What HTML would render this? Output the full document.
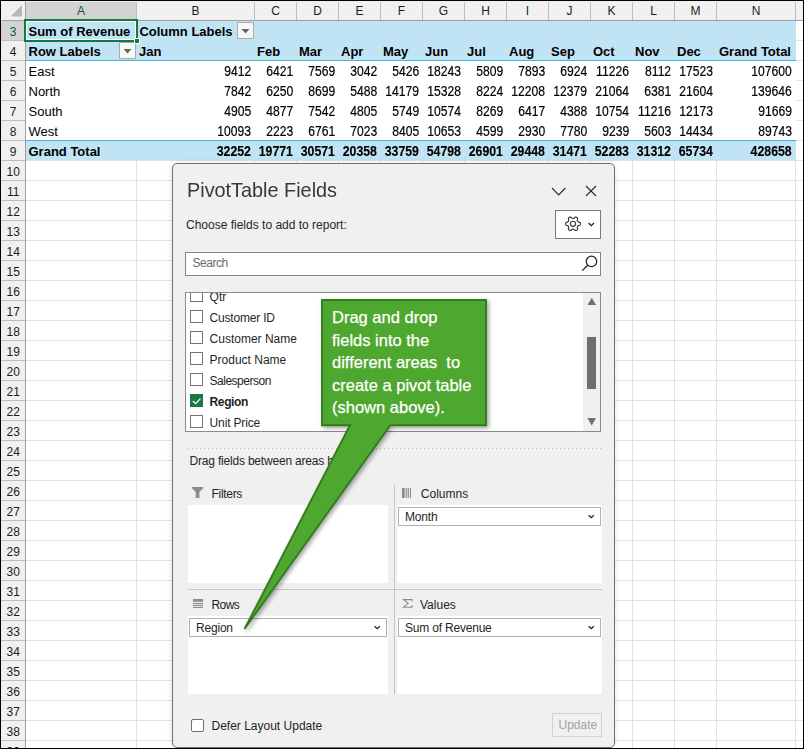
<!DOCTYPE html>
<html><head><meta charset="utf-8"><style>
*{margin:0;padding:0;box-sizing:border-box}
html,body{width:804px;height:749px;overflow:hidden;background:#fff;font-family:"Liberation Sans",sans-serif;color:#000}
.a{position:absolute}
.s{position:absolute;white-space:nowrap}
.s span{display:inline-block}
</style></head><body>
<div class="a" style="left:0;top:0;width:804px;height:749px;overflow:hidden">

<div class="a" style="left:1px;top:1px;width:802px;height:19px;background:#f0f0f0"></div>
<div class="a" style="left:1px;top:20px;width:24px;height:728px;background:#f0f0f0"></div>
<div class="a" style="left:26px;top:2px;width:110px;height:18px;background:#d3d3d3"></div>
<div class="a" style="left:1px;top:21px;width:24px;height:19px;background:#d3d3d3"></div>
<svg class="a" style="left:0;top:0" width="26" height="20"><polygon points="10.5,16.5 22,5 22,16.5" fill="#b9b9b9"/></svg>
<div class="a" style="left:26px;top:40px;width:777px;height:1px;background:#e1e1e1"></div>
<div class="a" style="left:26px;top:60px;width:777px;height:1px;background:#e1e1e1"></div>
<div class="a" style="left:26px;top:80px;width:777px;height:1px;background:#e1e1e1"></div>
<div class="a" style="left:26px;top:100px;width:777px;height:1px;background:#e1e1e1"></div>
<div class="a" style="left:26px;top:120px;width:777px;height:1px;background:#e1e1e1"></div>
<div class="a" style="left:26px;top:140px;width:777px;height:1px;background:#e1e1e1"></div>
<div class="a" style="left:26px;top:160px;width:777px;height:1px;background:#e1e1e1"></div>
<div class="a" style="left:26px;top:180px;width:777px;height:1px;background:#e1e1e1"></div>
<div class="a" style="left:26px;top:200px;width:777px;height:1px;background:#e1e1e1"></div>
<div class="a" style="left:26px;top:220px;width:777px;height:1px;background:#e1e1e1"></div>
<div class="a" style="left:26px;top:240px;width:777px;height:1px;background:#e1e1e1"></div>
<div class="a" style="left:26px;top:260px;width:777px;height:1px;background:#e1e1e1"></div>
<div class="a" style="left:26px;top:280px;width:777px;height:1px;background:#e1e1e1"></div>
<div class="a" style="left:26px;top:300px;width:777px;height:1px;background:#e1e1e1"></div>
<div class="a" style="left:26px;top:320px;width:777px;height:1px;background:#e1e1e1"></div>
<div class="a" style="left:26px;top:340px;width:777px;height:1px;background:#e1e1e1"></div>
<div class="a" style="left:26px;top:360px;width:777px;height:1px;background:#e1e1e1"></div>
<div class="a" style="left:26px;top:380px;width:777px;height:1px;background:#e1e1e1"></div>
<div class="a" style="left:26px;top:400px;width:777px;height:1px;background:#e1e1e1"></div>
<div class="a" style="left:26px;top:420px;width:777px;height:1px;background:#e1e1e1"></div>
<div class="a" style="left:26px;top:440px;width:777px;height:1px;background:#e1e1e1"></div>
<div class="a" style="left:26px;top:460px;width:777px;height:1px;background:#e1e1e1"></div>
<div class="a" style="left:26px;top:480px;width:777px;height:1px;background:#e1e1e1"></div>
<div class="a" style="left:26px;top:500px;width:777px;height:1px;background:#e1e1e1"></div>
<div class="a" style="left:26px;top:520px;width:777px;height:1px;background:#e1e1e1"></div>
<div class="a" style="left:26px;top:540px;width:777px;height:1px;background:#e1e1e1"></div>
<div class="a" style="left:26px;top:560px;width:777px;height:1px;background:#e1e1e1"></div>
<div class="a" style="left:26px;top:580px;width:777px;height:1px;background:#e1e1e1"></div>
<div class="a" style="left:26px;top:600px;width:777px;height:1px;background:#e1e1e1"></div>
<div class="a" style="left:26px;top:620px;width:777px;height:1px;background:#e1e1e1"></div>
<div class="a" style="left:26px;top:640px;width:777px;height:1px;background:#e1e1e1"></div>
<div class="a" style="left:26px;top:660px;width:777px;height:1px;background:#e1e1e1"></div>
<div class="a" style="left:26px;top:680px;width:777px;height:1px;background:#e1e1e1"></div>
<div class="a" style="left:26px;top:700px;width:777px;height:1px;background:#e1e1e1"></div>
<div class="a" style="left:26px;top:720px;width:777px;height:1px;background:#e1e1e1"></div>
<div class="a" style="left:26px;top:740px;width:777px;height:1px;background:#e1e1e1"></div>
<div class="a" style="left:136px;top:21px;width:1px;height:727px;background:#e1e1e1"></div>
<div class="a" style="left:254px;top:21px;width:1px;height:727px;background:#e1e1e1"></div>
<div class="a" style="left:296px;top:21px;width:1px;height:727px;background:#e1e1e1"></div>
<div class="a" style="left:338px;top:21px;width:1px;height:727px;background:#e1e1e1"></div>
<div class="a" style="left:380px;top:21px;width:1px;height:727px;background:#e1e1e1"></div>
<div class="a" style="left:422px;top:21px;width:1px;height:727px;background:#e1e1e1"></div>
<div class="a" style="left:464px;top:21px;width:1px;height:727px;background:#e1e1e1"></div>
<div class="a" style="left:506px;top:21px;width:1px;height:727px;background:#e1e1e1"></div>
<div class="a" style="left:548px;top:21px;width:1px;height:727px;background:#e1e1e1"></div>
<div class="a" style="left:590px;top:21px;width:1px;height:727px;background:#e1e1e1"></div>
<div class="a" style="left:632px;top:21px;width:1px;height:727px;background:#e1e1e1"></div>
<div class="a" style="left:674px;top:21px;width:1px;height:727px;background:#e1e1e1"></div>
<div class="a" style="left:716px;top:21px;width:1px;height:727px;background:#e1e1e1"></div>
<div class="a" style="left:795px;top:21px;width:1px;height:727px;background:#e1e1e1"></div>
<div class="a" style="left:136px;top:2px;width:1px;height:18px;background:#bdbdbd"></div>
<div class="a" style="left:254px;top:2px;width:1px;height:18px;background:#bdbdbd"></div>
<div class="a" style="left:296px;top:2px;width:1px;height:18px;background:#bdbdbd"></div>
<div class="a" style="left:338px;top:2px;width:1px;height:18px;background:#bdbdbd"></div>
<div class="a" style="left:380px;top:2px;width:1px;height:18px;background:#bdbdbd"></div>
<div class="a" style="left:422px;top:2px;width:1px;height:18px;background:#bdbdbd"></div>
<div class="a" style="left:464px;top:2px;width:1px;height:18px;background:#bdbdbd"></div>
<div class="a" style="left:506px;top:2px;width:1px;height:18px;background:#bdbdbd"></div>
<div class="a" style="left:548px;top:2px;width:1px;height:18px;background:#bdbdbd"></div>
<div class="a" style="left:590px;top:2px;width:1px;height:18px;background:#bdbdbd"></div>
<div class="a" style="left:632px;top:2px;width:1px;height:18px;background:#bdbdbd"></div>
<div class="a" style="left:674px;top:2px;width:1px;height:18px;background:#bdbdbd"></div>
<div class="a" style="left:716px;top:2px;width:1px;height:18px;background:#bdbdbd"></div>
<div class="a" style="left:795px;top:2px;width:1px;height:18px;background:#bdbdbd"></div>
<div class="a" style="left:1px;top:40px;width:24px;height:1px;background:#bdbdbd"></div>
<div class="a" style="left:1px;top:60px;width:24px;height:1px;background:#bdbdbd"></div>
<div class="a" style="left:1px;top:80px;width:24px;height:1px;background:#bdbdbd"></div>
<div class="a" style="left:1px;top:100px;width:24px;height:1px;background:#bdbdbd"></div>
<div class="a" style="left:1px;top:120px;width:24px;height:1px;background:#bdbdbd"></div>
<div class="a" style="left:1px;top:140px;width:24px;height:1px;background:#bdbdbd"></div>
<div class="a" style="left:1px;top:160px;width:24px;height:1px;background:#bdbdbd"></div>
<div class="a" style="left:1px;top:180px;width:24px;height:1px;background:#bdbdbd"></div>
<div class="a" style="left:1px;top:200px;width:24px;height:1px;background:#bdbdbd"></div>
<div class="a" style="left:1px;top:220px;width:24px;height:1px;background:#bdbdbd"></div>
<div class="a" style="left:1px;top:240px;width:24px;height:1px;background:#bdbdbd"></div>
<div class="a" style="left:1px;top:260px;width:24px;height:1px;background:#bdbdbd"></div>
<div class="a" style="left:1px;top:280px;width:24px;height:1px;background:#bdbdbd"></div>
<div class="a" style="left:1px;top:300px;width:24px;height:1px;background:#bdbdbd"></div>
<div class="a" style="left:1px;top:320px;width:24px;height:1px;background:#bdbdbd"></div>
<div class="a" style="left:1px;top:340px;width:24px;height:1px;background:#bdbdbd"></div>
<div class="a" style="left:1px;top:360px;width:24px;height:1px;background:#bdbdbd"></div>
<div class="a" style="left:1px;top:380px;width:24px;height:1px;background:#bdbdbd"></div>
<div class="a" style="left:1px;top:400px;width:24px;height:1px;background:#bdbdbd"></div>
<div class="a" style="left:1px;top:420px;width:24px;height:1px;background:#bdbdbd"></div>
<div class="a" style="left:1px;top:440px;width:24px;height:1px;background:#bdbdbd"></div>
<div class="a" style="left:1px;top:460px;width:24px;height:1px;background:#bdbdbd"></div>
<div class="a" style="left:1px;top:480px;width:24px;height:1px;background:#bdbdbd"></div>
<div class="a" style="left:1px;top:500px;width:24px;height:1px;background:#bdbdbd"></div>
<div class="a" style="left:1px;top:520px;width:24px;height:1px;background:#bdbdbd"></div>
<div class="a" style="left:1px;top:540px;width:24px;height:1px;background:#bdbdbd"></div>
<div class="a" style="left:1px;top:560px;width:24px;height:1px;background:#bdbdbd"></div>
<div class="a" style="left:1px;top:580px;width:24px;height:1px;background:#bdbdbd"></div>
<div class="a" style="left:1px;top:600px;width:24px;height:1px;background:#bdbdbd"></div>
<div class="a" style="left:1px;top:620px;width:24px;height:1px;background:#bdbdbd"></div>
<div class="a" style="left:1px;top:640px;width:24px;height:1px;background:#bdbdbd"></div>
<div class="a" style="left:1px;top:660px;width:24px;height:1px;background:#bdbdbd"></div>
<div class="a" style="left:1px;top:680px;width:24px;height:1px;background:#bdbdbd"></div>
<div class="a" style="left:1px;top:700px;width:24px;height:1px;background:#bdbdbd"></div>
<div class="a" style="left:1px;top:720px;width:24px;height:1px;background:#bdbdbd"></div>
<div class="a" style="left:1px;top:740px;width:24px;height:1px;background:#bdbdbd"></div>
<div class="a" style="left:1px;top:20px;width:802px;height:1px;background:#a0a0a0"></div>
<div class="a" style="left:25px;top:1px;width:1px;height:747px;background:#a0a0a0"></div>
<div class="s" style="left:-19.0px;width:200px;text-align:center;top:4.84px;font-size:12px;line-height:12px;font-weight:normal;color:#0e5c2e;">A</div>
<div class="s" style="left:95.5px;width:200px;text-align:center;top:4.84px;font-size:12px;line-height:12px;font-weight:normal;color:#1c1c1c;">B</div>
<div class="s" style="left:175.5px;width:200px;text-align:center;top:4.84px;font-size:12px;line-height:12px;font-weight:normal;color:#1c1c1c;">C</div>
<div class="s" style="left:217.5px;width:200px;text-align:center;top:4.84px;font-size:12px;line-height:12px;font-weight:normal;color:#1c1c1c;">D</div>
<div class="s" style="left:259.5px;width:200px;text-align:center;top:4.84px;font-size:12px;line-height:12px;font-weight:normal;color:#1c1c1c;">E</div>
<div class="s" style="left:301.5px;width:200px;text-align:center;top:4.84px;font-size:12px;line-height:12px;font-weight:normal;color:#1c1c1c;">F</div>
<div class="s" style="left:343.5px;width:200px;text-align:center;top:4.84px;font-size:12px;line-height:12px;font-weight:normal;color:#1c1c1c;">G</div>
<div class="s" style="left:385.5px;width:200px;text-align:center;top:4.84px;font-size:12px;line-height:12px;font-weight:normal;color:#1c1c1c;">H</div>
<div class="s" style="left:427.5px;width:200px;text-align:center;top:4.84px;font-size:12px;line-height:12px;font-weight:normal;color:#1c1c1c;">I</div>
<div class="s" style="left:469.5px;width:200px;text-align:center;top:4.84px;font-size:12px;line-height:12px;font-weight:normal;color:#1c1c1c;">J</div>
<div class="s" style="left:511.5px;width:200px;text-align:center;top:4.84px;font-size:12px;line-height:12px;font-weight:normal;color:#1c1c1c;">K</div>
<div class="s" style="left:553.5px;width:200px;text-align:center;top:4.84px;font-size:12px;line-height:12px;font-weight:normal;color:#1c1c1c;">L</div>
<div class="s" style="left:595.5px;width:200px;text-align:center;top:4.84px;font-size:12px;line-height:12px;font-weight:normal;color:#1c1c1c;">M</div>
<div class="s" style="left:656.0px;width:200px;text-align:center;top:4.84px;font-size:12px;line-height:12px;font-weight:normal;color:#1c1c1c;">N</div>
<div class="s" style="left:-86.8px;width:200px;text-align:center;top:25.84px;font-size:12px;line-height:12px;font-weight:normal;color:#0e5c2e;">3</div>
<div class="s" style="left:-86.8px;width:200px;text-align:center;top:45.84px;font-size:12px;line-height:12px;font-weight:normal;color:#1c1c1c;">4</div>
<div class="s" style="left:-86.8px;width:200px;text-align:center;top:65.84px;font-size:12px;line-height:12px;font-weight:normal;color:#1c1c1c;">5</div>
<div class="s" style="left:-86.8px;width:200px;text-align:center;top:85.84px;font-size:12px;line-height:12px;font-weight:normal;color:#1c1c1c;">6</div>
<div class="s" style="left:-86.8px;width:200px;text-align:center;top:105.84px;font-size:12px;line-height:12px;font-weight:normal;color:#1c1c1c;">7</div>
<div class="s" style="left:-86.8px;width:200px;text-align:center;top:125.84px;font-size:12px;line-height:12px;font-weight:normal;color:#1c1c1c;">8</div>
<div class="s" style="left:-86.8px;width:200px;text-align:center;top:145.84px;font-size:12px;line-height:12px;font-weight:normal;color:#1c1c1c;">9</div>
<div class="s" style="left:-86.8px;width:200px;text-align:center;top:165.84px;font-size:12px;line-height:12px;font-weight:normal;color:#1c1c1c;">10</div>
<div class="s" style="left:-86.8px;width:200px;text-align:center;top:185.84px;font-size:12px;line-height:12px;font-weight:normal;color:#1c1c1c;">11</div>
<div class="s" style="left:-86.8px;width:200px;text-align:center;top:205.84px;font-size:12px;line-height:12px;font-weight:normal;color:#1c1c1c;">12</div>
<div class="s" style="left:-86.8px;width:200px;text-align:center;top:225.84px;font-size:12px;line-height:12px;font-weight:normal;color:#1c1c1c;">13</div>
<div class="s" style="left:-86.8px;width:200px;text-align:center;top:245.84px;font-size:12px;line-height:12px;font-weight:normal;color:#1c1c1c;">14</div>
<div class="s" style="left:-86.8px;width:200px;text-align:center;top:265.84px;font-size:12px;line-height:12px;font-weight:normal;color:#1c1c1c;">15</div>
<div class="s" style="left:-86.8px;width:200px;text-align:center;top:285.84px;font-size:12px;line-height:12px;font-weight:normal;color:#1c1c1c;">16</div>
<div class="s" style="left:-86.8px;width:200px;text-align:center;top:305.84px;font-size:12px;line-height:12px;font-weight:normal;color:#1c1c1c;">17</div>
<div class="s" style="left:-86.8px;width:200px;text-align:center;top:325.84px;font-size:12px;line-height:12px;font-weight:normal;color:#1c1c1c;">18</div>
<div class="s" style="left:-86.8px;width:200px;text-align:center;top:345.84px;font-size:12px;line-height:12px;font-weight:normal;color:#1c1c1c;">19</div>
<div class="s" style="left:-86.8px;width:200px;text-align:center;top:365.84px;font-size:12px;line-height:12px;font-weight:normal;color:#1c1c1c;">20</div>
<div class="s" style="left:-86.8px;width:200px;text-align:center;top:385.84px;font-size:12px;line-height:12px;font-weight:normal;color:#1c1c1c;">21</div>
<div class="s" style="left:-86.8px;width:200px;text-align:center;top:405.84px;font-size:12px;line-height:12px;font-weight:normal;color:#1c1c1c;">22</div>
<div class="s" style="left:-86.8px;width:200px;text-align:center;top:425.84px;font-size:12px;line-height:12px;font-weight:normal;color:#1c1c1c;">23</div>
<div class="s" style="left:-86.8px;width:200px;text-align:center;top:445.84px;font-size:12px;line-height:12px;font-weight:normal;color:#1c1c1c;">24</div>
<div class="s" style="left:-86.8px;width:200px;text-align:center;top:465.84px;font-size:12px;line-height:12px;font-weight:normal;color:#1c1c1c;">25</div>
<div class="s" style="left:-86.8px;width:200px;text-align:center;top:485.84px;font-size:12px;line-height:12px;font-weight:normal;color:#1c1c1c;">26</div>
<div class="s" style="left:-86.8px;width:200px;text-align:center;top:505.84px;font-size:12px;line-height:12px;font-weight:normal;color:#1c1c1c;">27</div>
<div class="s" style="left:-86.8px;width:200px;text-align:center;top:525.84px;font-size:12px;line-height:12px;font-weight:normal;color:#1c1c1c;">28</div>
<div class="s" style="left:-86.8px;width:200px;text-align:center;top:545.84px;font-size:12px;line-height:12px;font-weight:normal;color:#1c1c1c;">29</div>
<div class="s" style="left:-86.8px;width:200px;text-align:center;top:565.84px;font-size:12px;line-height:12px;font-weight:normal;color:#1c1c1c;">30</div>
<div class="s" style="left:-86.8px;width:200px;text-align:center;top:585.84px;font-size:12px;line-height:12px;font-weight:normal;color:#1c1c1c;">31</div>
<div class="s" style="left:-86.8px;width:200px;text-align:center;top:605.84px;font-size:12px;line-height:12px;font-weight:normal;color:#1c1c1c;">32</div>
<div class="s" style="left:-86.8px;width:200px;text-align:center;top:625.84px;font-size:12px;line-height:12px;font-weight:normal;color:#1c1c1c;">33</div>
<div class="s" style="left:-86.8px;width:200px;text-align:center;top:645.84px;font-size:12px;line-height:12px;font-weight:normal;color:#1c1c1c;">34</div>
<div class="s" style="left:-86.8px;width:200px;text-align:center;top:665.84px;font-size:12px;line-height:12px;font-weight:normal;color:#1c1c1c;">35</div>
<div class="s" style="left:-86.8px;width:200px;text-align:center;top:685.84px;font-size:12px;line-height:12px;font-weight:normal;color:#1c1c1c;">36</div>
<div class="s" style="left:-86.8px;width:200px;text-align:center;top:705.84px;font-size:12px;line-height:12px;font-weight:normal;color:#1c1c1c;">37</div>
<div class="s" style="left:-86.8px;width:200px;text-align:center;top:725.84px;font-size:12px;line-height:12px;font-weight:normal;color:#1c1c1c;">38</div>
<div class="s" style="left:-86.8px;width:200px;text-align:center;top:745.84px;font-size:12px;line-height:12px;font-weight:normal;color:#1c1c1c;">39</div>
<div class="a" style="left:26px;top:21px;width:770px;height:39px;background:#c1e4f5"></div>
<div class="a" style="left:26px;top:60px;width:770px;height:1px;background:#44b3e1"></div>
<div class="a" style="left:26px;top:61px;width:770px;height:79px;background:#fff"></div>
<div class="a" style="left:26px;top:140px;width:770px;height:1px;background:#44b3e1"></div>
<div class="a" style="left:26px;top:141px;width:770px;height:19px;background:#c1e4f5"></div>
<div class="s" style="left:28.5px;top:25.00px;font-size:13px;line-height:13px;font-weight:bold;color:#000;">Sum of Revenue</div>
<div class="s" style="left:139.4px;top:25.00px;font-size:13px;line-height:13px;font-weight:bold;color:#000;">Column Labels</div>
<div class="s" style="left:28.5px;top:45.00px;font-size:13px;line-height:13px;font-weight:bold;color:#000;">Row Labels</div>
<div class="s" style="left:139px;top:45.00px;font-size:13px;line-height:13px;font-weight:bold;color:#000;">Jan</div>
<div class="s" style="left:257px;top:45.00px;font-size:13px;line-height:13px;font-weight:bold;color:#000;">Feb</div>
<div class="s" style="left:299px;top:45.00px;font-size:13px;line-height:13px;font-weight:bold;color:#000;">Mar</div>
<div class="s" style="left:341px;top:45.00px;font-size:13px;line-height:13px;font-weight:bold;color:#000;">Apr</div>
<div class="s" style="left:383px;top:45.00px;font-size:13px;line-height:13px;font-weight:bold;color:#000;">May</div>
<div class="s" style="left:425px;top:45.00px;font-size:13px;line-height:13px;font-weight:bold;color:#000;">Jun</div>
<div class="s" style="left:467px;top:45.00px;font-size:13px;line-height:13px;font-weight:bold;color:#000;">Jul</div>
<div class="s" style="left:509px;top:45.00px;font-size:13px;line-height:13px;font-weight:bold;color:#000;">Aug</div>
<div class="s" style="left:551px;top:45.00px;font-size:13px;line-height:13px;font-weight:bold;color:#000;">Sep</div>
<div class="s" style="left:593px;top:45.00px;font-size:13px;line-height:13px;font-weight:bold;color:#000;">Oct</div>
<div class="s" style="left:635px;top:45.00px;font-size:13px;line-height:13px;font-weight:bold;color:#000;">Nov</div>
<div class="s" style="left:677px;top:45.00px;font-size:13px;line-height:13px;font-weight:bold;color:#000;">Dec</div>
<div class="s" style="left:719px;top:45.00px;font-size:13px;line-height:13px;font-weight:bold;color:#000;">Grand Total</div>
<div class="s" style="left:28.5px;top:65.00px;font-size:13px;line-height:13px;font-weight:normal;color:#000;">East</div>
<div class="s" style="right:552.8px;text-align:right;top:64.15px;font-size:14px;line-height:14px;font-weight:normal;color:#000;-webkit-text-stroke:0.2px #000;"><span style="transform:scaleX(0.865);transform-origin:100% 0">9412</span></div>
<div class="s" style="right:510.8px;text-align:right;top:64.15px;font-size:14px;line-height:14px;font-weight:normal;color:#000;-webkit-text-stroke:0.2px #000;"><span style="transform:scaleX(0.865);transform-origin:100% 0">6421</span></div>
<div class="s" style="right:468.8px;text-align:right;top:64.15px;font-size:14px;line-height:14px;font-weight:normal;color:#000;-webkit-text-stroke:0.2px #000;"><span style="transform:scaleX(0.865);transform-origin:100% 0">7569</span></div>
<div class="s" style="right:426.8px;text-align:right;top:64.15px;font-size:14px;line-height:14px;font-weight:normal;color:#000;-webkit-text-stroke:0.2px #000;"><span style="transform:scaleX(0.865);transform-origin:100% 0">3042</span></div>
<div class="s" style="right:384.8px;text-align:right;top:64.15px;font-size:14px;line-height:14px;font-weight:normal;color:#000;-webkit-text-stroke:0.2px #000;"><span style="transform:scaleX(0.865);transform-origin:100% 0">5426</span></div>
<div class="s" style="right:342.8px;text-align:right;top:64.15px;font-size:14px;line-height:14px;font-weight:normal;color:#000;-webkit-text-stroke:0.2px #000;"><span style="transform:scaleX(0.865);transform-origin:100% 0">18243</span></div>
<div class="s" style="right:300.8px;text-align:right;top:64.15px;font-size:14px;line-height:14px;font-weight:normal;color:#000;-webkit-text-stroke:0.2px #000;"><span style="transform:scaleX(0.865);transform-origin:100% 0">5809</span></div>
<div class="s" style="right:258.79999999999995px;text-align:right;top:64.15px;font-size:14px;line-height:14px;font-weight:normal;color:#000;-webkit-text-stroke:0.2px #000;"><span style="transform:scaleX(0.865);transform-origin:100% 0">7893</span></div>
<div class="s" style="right:216.79999999999995px;text-align:right;top:64.15px;font-size:14px;line-height:14px;font-weight:normal;color:#000;-webkit-text-stroke:0.2px #000;"><span style="transform:scaleX(0.865);transform-origin:100% 0">6924</span></div>
<div class="s" style="right:174.79999999999995px;text-align:right;top:64.15px;font-size:14px;line-height:14px;font-weight:normal;color:#000;-webkit-text-stroke:0.2px #000;"><span style="transform:scaleX(0.865);transform-origin:100% 0">11226</span></div>
<div class="s" style="right:132.79999999999995px;text-align:right;top:64.15px;font-size:14px;line-height:14px;font-weight:normal;color:#000;-webkit-text-stroke:0.2px #000;"><span style="transform:scaleX(0.865);transform-origin:100% 0">8112</span></div>
<div class="s" style="right:90.79999999999995px;text-align:right;top:64.15px;font-size:14px;line-height:14px;font-weight:normal;color:#000;-webkit-text-stroke:0.2px #000;"><span style="transform:scaleX(0.865);transform-origin:100% 0">17523</span></div>
<div class="s" style="right:11.799999999999955px;text-align:right;top:64.15px;font-size:14px;line-height:14px;font-weight:normal;color:#000;-webkit-text-stroke:0.2px #000;"><span style="transform:scaleX(0.865);transform-origin:100% 0">107600</span></div>
<div class="s" style="left:28.5px;top:85.00px;font-size:13px;line-height:13px;font-weight:normal;color:#000;">North</div>
<div class="s" style="right:552.8px;text-align:right;top:84.15px;font-size:14px;line-height:14px;font-weight:normal;color:#000;-webkit-text-stroke:0.2px #000;"><span style="transform:scaleX(0.865);transform-origin:100% 0">7842</span></div>
<div class="s" style="right:510.8px;text-align:right;top:84.15px;font-size:14px;line-height:14px;font-weight:normal;color:#000;-webkit-text-stroke:0.2px #000;"><span style="transform:scaleX(0.865);transform-origin:100% 0">6250</span></div>
<div class="s" style="right:468.8px;text-align:right;top:84.15px;font-size:14px;line-height:14px;font-weight:normal;color:#000;-webkit-text-stroke:0.2px #000;"><span style="transform:scaleX(0.865);transform-origin:100% 0">8699</span></div>
<div class="s" style="right:426.8px;text-align:right;top:84.15px;font-size:14px;line-height:14px;font-weight:normal;color:#000;-webkit-text-stroke:0.2px #000;"><span style="transform:scaleX(0.865);transform-origin:100% 0">5488</span></div>
<div class="s" style="right:384.8px;text-align:right;top:84.15px;font-size:14px;line-height:14px;font-weight:normal;color:#000;-webkit-text-stroke:0.2px #000;"><span style="transform:scaleX(0.865);transform-origin:100% 0">14179</span></div>
<div class="s" style="right:342.8px;text-align:right;top:84.15px;font-size:14px;line-height:14px;font-weight:normal;color:#000;-webkit-text-stroke:0.2px #000;"><span style="transform:scaleX(0.865);transform-origin:100% 0">15328</span></div>
<div class="s" style="right:300.8px;text-align:right;top:84.15px;font-size:14px;line-height:14px;font-weight:normal;color:#000;-webkit-text-stroke:0.2px #000;"><span style="transform:scaleX(0.865);transform-origin:100% 0">8224</span></div>
<div class="s" style="right:258.79999999999995px;text-align:right;top:84.15px;font-size:14px;line-height:14px;font-weight:normal;color:#000;-webkit-text-stroke:0.2px #000;"><span style="transform:scaleX(0.865);transform-origin:100% 0">12208</span></div>
<div class="s" style="right:216.79999999999995px;text-align:right;top:84.15px;font-size:14px;line-height:14px;font-weight:normal;color:#000;-webkit-text-stroke:0.2px #000;"><span style="transform:scaleX(0.865);transform-origin:100% 0">12379</span></div>
<div class="s" style="right:174.79999999999995px;text-align:right;top:84.15px;font-size:14px;line-height:14px;font-weight:normal;color:#000;-webkit-text-stroke:0.2px #000;"><span style="transform:scaleX(0.865);transform-origin:100% 0">21064</span></div>
<div class="s" style="right:132.79999999999995px;text-align:right;top:84.15px;font-size:14px;line-height:14px;font-weight:normal;color:#000;-webkit-text-stroke:0.2px #000;"><span style="transform:scaleX(0.865);transform-origin:100% 0">6381</span></div>
<div class="s" style="right:90.79999999999995px;text-align:right;top:84.15px;font-size:14px;line-height:14px;font-weight:normal;color:#000;-webkit-text-stroke:0.2px #000;"><span style="transform:scaleX(0.865);transform-origin:100% 0">21604</span></div>
<div class="s" style="right:11.799999999999955px;text-align:right;top:84.15px;font-size:14px;line-height:14px;font-weight:normal;color:#000;-webkit-text-stroke:0.2px #000;"><span style="transform:scaleX(0.865);transform-origin:100% 0">139646</span></div>
<div class="s" style="left:28.5px;top:105.00px;font-size:13px;line-height:13px;font-weight:normal;color:#000;">South</div>
<div class="s" style="right:552.8px;text-align:right;top:104.15px;font-size:14px;line-height:14px;font-weight:normal;color:#000;-webkit-text-stroke:0.2px #000;"><span style="transform:scaleX(0.865);transform-origin:100% 0">4905</span></div>
<div class="s" style="right:510.8px;text-align:right;top:104.15px;font-size:14px;line-height:14px;font-weight:normal;color:#000;-webkit-text-stroke:0.2px #000;"><span style="transform:scaleX(0.865);transform-origin:100% 0">4877</span></div>
<div class="s" style="right:468.8px;text-align:right;top:104.15px;font-size:14px;line-height:14px;font-weight:normal;color:#000;-webkit-text-stroke:0.2px #000;"><span style="transform:scaleX(0.865);transform-origin:100% 0">7542</span></div>
<div class="s" style="right:426.8px;text-align:right;top:104.15px;font-size:14px;line-height:14px;font-weight:normal;color:#000;-webkit-text-stroke:0.2px #000;"><span style="transform:scaleX(0.865);transform-origin:100% 0">4805</span></div>
<div class="s" style="right:384.8px;text-align:right;top:104.15px;font-size:14px;line-height:14px;font-weight:normal;color:#000;-webkit-text-stroke:0.2px #000;"><span style="transform:scaleX(0.865);transform-origin:100% 0">5749</span></div>
<div class="s" style="right:342.8px;text-align:right;top:104.15px;font-size:14px;line-height:14px;font-weight:normal;color:#000;-webkit-text-stroke:0.2px #000;"><span style="transform:scaleX(0.865);transform-origin:100% 0">10574</span></div>
<div class="s" style="right:300.8px;text-align:right;top:104.15px;font-size:14px;line-height:14px;font-weight:normal;color:#000;-webkit-text-stroke:0.2px #000;"><span style="transform:scaleX(0.865);transform-origin:100% 0">8269</span></div>
<div class="s" style="right:258.79999999999995px;text-align:right;top:104.15px;font-size:14px;line-height:14px;font-weight:normal;color:#000;-webkit-text-stroke:0.2px #000;"><span style="transform:scaleX(0.865);transform-origin:100% 0">6417</span></div>
<div class="s" style="right:216.79999999999995px;text-align:right;top:104.15px;font-size:14px;line-height:14px;font-weight:normal;color:#000;-webkit-text-stroke:0.2px #000;"><span style="transform:scaleX(0.865);transform-origin:100% 0">4388</span></div>
<div class="s" style="right:174.79999999999995px;text-align:right;top:104.15px;font-size:14px;line-height:14px;font-weight:normal;color:#000;-webkit-text-stroke:0.2px #000;"><span style="transform:scaleX(0.865);transform-origin:100% 0">10754</span></div>
<div class="s" style="right:132.79999999999995px;text-align:right;top:104.15px;font-size:14px;line-height:14px;font-weight:normal;color:#000;-webkit-text-stroke:0.2px #000;"><span style="transform:scaleX(0.865);transform-origin:100% 0">11216</span></div>
<div class="s" style="right:90.79999999999995px;text-align:right;top:104.15px;font-size:14px;line-height:14px;font-weight:normal;color:#000;-webkit-text-stroke:0.2px #000;"><span style="transform:scaleX(0.865);transform-origin:100% 0">12173</span></div>
<div class="s" style="right:11.799999999999955px;text-align:right;top:104.15px;font-size:14px;line-height:14px;font-weight:normal;color:#000;-webkit-text-stroke:0.2px #000;"><span style="transform:scaleX(0.865);transform-origin:100% 0">91669</span></div>
<div class="s" style="left:28.5px;top:125.00px;font-size:13px;line-height:13px;font-weight:normal;color:#000;">West</div>
<div class="s" style="right:552.8px;text-align:right;top:124.15px;font-size:14px;line-height:14px;font-weight:normal;color:#000;-webkit-text-stroke:0.2px #000;"><span style="transform:scaleX(0.865);transform-origin:100% 0">10093</span></div>
<div class="s" style="right:510.8px;text-align:right;top:124.15px;font-size:14px;line-height:14px;font-weight:normal;color:#000;-webkit-text-stroke:0.2px #000;"><span style="transform:scaleX(0.865);transform-origin:100% 0">2223</span></div>
<div class="s" style="right:468.8px;text-align:right;top:124.15px;font-size:14px;line-height:14px;font-weight:normal;color:#000;-webkit-text-stroke:0.2px #000;"><span style="transform:scaleX(0.865);transform-origin:100% 0">6761</span></div>
<div class="s" style="right:426.8px;text-align:right;top:124.15px;font-size:14px;line-height:14px;font-weight:normal;color:#000;-webkit-text-stroke:0.2px #000;"><span style="transform:scaleX(0.865);transform-origin:100% 0">7023</span></div>
<div class="s" style="right:384.8px;text-align:right;top:124.15px;font-size:14px;line-height:14px;font-weight:normal;color:#000;-webkit-text-stroke:0.2px #000;"><span style="transform:scaleX(0.865);transform-origin:100% 0">8405</span></div>
<div class="s" style="right:342.8px;text-align:right;top:124.15px;font-size:14px;line-height:14px;font-weight:normal;color:#000;-webkit-text-stroke:0.2px #000;"><span style="transform:scaleX(0.865);transform-origin:100% 0">10653</span></div>
<div class="s" style="right:300.8px;text-align:right;top:124.15px;font-size:14px;line-height:14px;font-weight:normal;color:#000;-webkit-text-stroke:0.2px #000;"><span style="transform:scaleX(0.865);transform-origin:100% 0">4599</span></div>
<div class="s" style="right:258.79999999999995px;text-align:right;top:124.15px;font-size:14px;line-height:14px;font-weight:normal;color:#000;-webkit-text-stroke:0.2px #000;"><span style="transform:scaleX(0.865);transform-origin:100% 0">2930</span></div>
<div class="s" style="right:216.79999999999995px;text-align:right;top:124.15px;font-size:14px;line-height:14px;font-weight:normal;color:#000;-webkit-text-stroke:0.2px #000;"><span style="transform:scaleX(0.865);transform-origin:100% 0">7780</span></div>
<div class="s" style="right:174.79999999999995px;text-align:right;top:124.15px;font-size:14px;line-height:14px;font-weight:normal;color:#000;-webkit-text-stroke:0.2px #000;"><span style="transform:scaleX(0.865);transform-origin:100% 0">9239</span></div>
<div class="s" style="right:132.79999999999995px;text-align:right;top:124.15px;font-size:14px;line-height:14px;font-weight:normal;color:#000;-webkit-text-stroke:0.2px #000;"><span style="transform:scaleX(0.865);transform-origin:100% 0">5603</span></div>
<div class="s" style="right:90.79999999999995px;text-align:right;top:124.15px;font-size:14px;line-height:14px;font-weight:normal;color:#000;-webkit-text-stroke:0.2px #000;"><span style="transform:scaleX(0.865);transform-origin:100% 0">14434</span></div>
<div class="s" style="right:11.799999999999955px;text-align:right;top:124.15px;font-size:14px;line-height:14px;font-weight:normal;color:#000;-webkit-text-stroke:0.2px #000;"><span style="transform:scaleX(0.865);transform-origin:100% 0">89743</span></div>
<div class="s" style="left:28.5px;top:145.00px;font-size:13px;line-height:13px;font-weight:bold;color:#000;">Grand Total</div>
<div class="s" style="right:552.8px;text-align:right;top:144.15px;font-size:14px;line-height:14px;font-weight:bold;color:#000;-webkit-text-stroke:0.15px #000;"><span style="transform:scaleX(0.88);transform-origin:100% 0">32252</span></div>
<div class="s" style="right:510.8px;text-align:right;top:144.15px;font-size:14px;line-height:14px;font-weight:bold;color:#000;-webkit-text-stroke:0.15px #000;"><span style="transform:scaleX(0.88);transform-origin:100% 0">19771</span></div>
<div class="s" style="right:468.8px;text-align:right;top:144.15px;font-size:14px;line-height:14px;font-weight:bold;color:#000;-webkit-text-stroke:0.15px #000;"><span style="transform:scaleX(0.88);transform-origin:100% 0">30571</span></div>
<div class="s" style="right:426.8px;text-align:right;top:144.15px;font-size:14px;line-height:14px;font-weight:bold;color:#000;-webkit-text-stroke:0.15px #000;"><span style="transform:scaleX(0.88);transform-origin:100% 0">20358</span></div>
<div class="s" style="right:384.8px;text-align:right;top:144.15px;font-size:14px;line-height:14px;font-weight:bold;color:#000;-webkit-text-stroke:0.15px #000;"><span style="transform:scaleX(0.88);transform-origin:100% 0">33759</span></div>
<div class="s" style="right:342.8px;text-align:right;top:144.15px;font-size:14px;line-height:14px;font-weight:bold;color:#000;-webkit-text-stroke:0.15px #000;"><span style="transform:scaleX(0.88);transform-origin:100% 0">54798</span></div>
<div class="s" style="right:300.8px;text-align:right;top:144.15px;font-size:14px;line-height:14px;font-weight:bold;color:#000;-webkit-text-stroke:0.15px #000;"><span style="transform:scaleX(0.88);transform-origin:100% 0">26901</span></div>
<div class="s" style="right:258.79999999999995px;text-align:right;top:144.15px;font-size:14px;line-height:14px;font-weight:bold;color:#000;-webkit-text-stroke:0.15px #000;"><span style="transform:scaleX(0.88);transform-origin:100% 0">29448</span></div>
<div class="s" style="right:216.79999999999995px;text-align:right;top:144.15px;font-size:14px;line-height:14px;font-weight:bold;color:#000;-webkit-text-stroke:0.15px #000;"><span style="transform:scaleX(0.88);transform-origin:100% 0">31471</span></div>
<div class="s" style="right:174.79999999999995px;text-align:right;top:144.15px;font-size:14px;line-height:14px;font-weight:bold;color:#000;-webkit-text-stroke:0.15px #000;"><span style="transform:scaleX(0.88);transform-origin:100% 0">52283</span></div>
<div class="s" style="right:132.79999999999995px;text-align:right;top:144.15px;font-size:14px;line-height:14px;font-weight:bold;color:#000;-webkit-text-stroke:0.15px #000;"><span style="transform:scaleX(0.88);transform-origin:100% 0">31312</span></div>
<div class="s" style="right:90.79999999999995px;text-align:right;top:144.15px;font-size:14px;line-height:14px;font-weight:bold;color:#000;-webkit-text-stroke:0.15px #000;"><span style="transform:scaleX(0.88);transform-origin:100% 0">65734</span></div>
<div class="s" style="right:11.799999999999955px;text-align:right;top:144.15px;font-size:14px;line-height:14px;font-weight:bold;color:#000;-webkit-text-stroke:0.15px #000;"><span style="transform:scaleX(0.88);transform-origin:100% 0">428658</span></div>
<div class="a" style="left:237px;top:22px;width:17px;height:17px;background:#f7f7f7;border:1px solid #ababab"></div>
<svg class="a" style="left:237px;top:22px" width="17" height="17"><polygon points="4.5,7 12.5,7 8.5,11.4" fill="#666"/></svg>
<div class="a" style="left:119px;top:42px;width:17px;height:17px;background:#f7f7f7;border:1px solid #ababab"></div>
<svg class="a" style="left:119px;top:42px" width="17" height="17"><polygon points="4.5,7 12.5,7 8.5,11.4" fill="#666"/></svg>
<div class="a" style="left:24px;top:19px;width:114px;height:23px;border:2px solid #107c41"></div>
<div class="a" style="left:26px;top:21px;width:110px;height:19px;border:1px solid #fff"></div>
<div class="a" style="left:134px;top:38px;width:6px;height:6px;background:#107c41;border:1px solid #fff"></div>
<div class="a" style="left:172px;top:163px;width:443px;height:585px;background:#f0f0f0;border:1px solid #6f6f6f;border-radius:5px;box-shadow:0 0 6px rgba(0,0,0,0.10)"></div>
<div class="a" style="left:187px;top:179.22px;font-size:21px;line-height:21px;white-space:nowrap;color:#383838;font-weight:normal;"><span style="display:inline-block;transform:scaleX(0.945);transform-origin:0 0">PivotTable Fields</span></div>
<svg class="a" style="left:548px;top:182px" width="56" height="20"><polyline points="4,6 10.7,13 17.4,6" fill="none" stroke="#2b2b2b" stroke-width="1.1"/><line x1="38" y1="4" x2="48" y2="14" stroke="#2b2b2b" stroke-width="1.1"/><line x1="48" y1="4" x2="38" y2="14" stroke="#2b2b2b" stroke-width="1.1"/></svg>
<div class="a" style="left:186px;top:218.84px;font-size:12px;line-height:12px;white-space:nowrap;color:#262626;font-weight:normal;">Choose fields to add to report:</div>
<div class="a" style="left:555px;top:210px;width:46px;height:29px;background:#fff;border:1px solid #7a7a7a"></div>
<svg class="a" style="left:555px;top:210px" width="46" height="29">
<path d="M25.40,13.80 L25.37,14.28 L25.24,14.75 L24.88,15.17 L24.13,15.44 L23.39,15.63 L22.99,15.87 L22.77,16.15 L22.59,16.45 L22.42,16.75 L22.29,17.09 L22.28,17.55 L22.49,18.29 L22.62,19.07 L22.44,19.59 L22.10,19.94 L21.70,20.21 L21.26,20.42 L20.79,20.54 L20.25,20.44 L19.64,19.93 L19.11,19.38 L18.71,19.16 L18.35,19.11 L18.00,19.10 L17.65,19.11 L17.29,19.16 L16.89,19.38 L16.36,19.93 L15.75,20.44 L15.21,20.54 L14.74,20.42 L14.30,20.21 L13.90,19.94 L13.56,19.59 L13.38,19.07 L13.51,18.29 L13.72,17.55 L13.71,17.09 L13.58,16.75 L13.41,16.45 L13.23,16.15 L13.01,15.87 L12.61,15.63 L11.87,15.44 L11.12,15.17 L10.76,14.75 L10.63,14.28 L10.60,13.80 L10.63,13.32 L10.76,12.85 L11.12,12.43 L11.87,12.16 L12.61,11.97 L13.01,11.73 L13.23,11.45 L13.41,11.15 L13.58,10.85 L13.71,10.51 L13.72,10.05 L13.51,9.31 L13.38,8.53 L13.56,8.01 L13.90,7.66 L14.30,7.39 L14.74,7.18 L15.21,7.06 L15.75,7.16 L16.36,7.67 L16.89,8.22 L17.29,8.44 L17.65,8.49 L18.00,8.50 L18.35,8.49 L18.71,8.44 L19.11,8.22 L19.64,7.67 L20.25,7.16 L20.79,7.06 L21.26,7.18 L21.70,7.39 L22.10,7.66 L22.44,8.01 L22.62,8.53 L22.49,9.31 L22.28,10.05 L22.29,10.51 L22.42,10.85 L22.59,11.15 L22.77,11.45 L22.99,11.73 L23.39,11.97 L24.13,12.16 L24.88,12.43 L25.24,12.85 L25.37,13.32 Z" fill="none" stroke="#333" stroke-width="1.15" stroke-linejoin="round"/>
<circle cx="18" cy="13.8" r="2.6" fill="none" stroke="#3a3a3a" stroke-width="1.1"/>
<polyline points="33.6,13 36.3,15.6 39,13" fill="none" stroke="#222" stroke-width="1.3"/>
</svg>
<div class="a" style="left:185px;top:252px;width:416px;height:24px;background:#fff;border:1px solid #858585"></div>
<div class="a" style="left:192.4px;top:257.34px;font-size:12px;line-height:12px;white-space:nowrap;color:#6b6b6b;font-weight:normal;letter-spacing:-0.45px;">Search</div>
<svg class="a" style="left:575px;top:252px" width="26" height="24"><circle cx="16.5" cy="9.4" r="5.2" fill="none" stroke="#222" stroke-width="1.25"/><line x1="12.7" y1="13.2" x2="7.3" y2="18.6" stroke="#222" stroke-width="1.3"/></svg>
<div class="a" style="left:185px;top:292px;width:416px;height:140px;background:#fff;border:1px solid #8a8a8a;overflow:hidden">
<div class="a" style="left:4px;top:-4px;width:13px;height:13px;background:#fff;border:1px solid #767676"></div>
<div class="a" style="left:23.6px;top:-1.66px;font-size:12px;line-height:12px;white-space:nowrap;color:#1f1f1f;font-weight:normal;letter-spacing:0px">Qtr</div>
<div class="a" style="left:4px;top:17px;width:13px;height:13px;background:#fff;border:1px solid #767676"></div>
<div class="a" style="left:23.6px;top:19.34px;font-size:12px;line-height:12px;white-space:nowrap;color:#1f1f1f;font-weight:normal;letter-spacing:-0.2px">Customer ID</div>
<div class="a" style="left:4px;top:38px;width:13px;height:13px;background:#fff;border:1px solid #767676"></div>
<div class="a" style="left:23.6px;top:40.34px;font-size:12px;line-height:12px;white-space:nowrap;color:#1f1f1f;font-weight:normal;letter-spacing:0px">Customer Name</div>
<div class="a" style="left:4px;top:59px;width:13px;height:13px;background:#fff;border:1px solid #767676"></div>
<div class="a" style="left:23.6px;top:61.34px;font-size:12px;line-height:12px;white-space:nowrap;color:#1f1f1f;font-weight:normal;letter-spacing:0px">Product Name</div>
<div class="a" style="left:4px;top:80px;width:13px;height:13px;background:#fff;border:1px solid #767676"></div>
<div class="a" style="left:23.6px;top:82.34px;font-size:12px;line-height:12px;white-space:nowrap;color:#1f1f1f;font-weight:normal;letter-spacing:-0.5px">Salesperson</div>
<div class="a" style="left:4px;top:101px;width:13px;height:13px;background:#1a7a42"></div>
<svg class="a" style="left:4px;top:101px" width="13" height="13"><polyline points="3,7 5.6,9.6 10.4,4.6" fill="none" stroke="#fff" stroke-width="1.3"/></svg>
<div class="a" style="left:23.6px;top:103.34px;font-size:12px;line-height:12px;white-space:nowrap;color:#1f1f1f;font-weight:bold;letter-spacing:-0.4px">Region</div>
<div class="a" style="left:4px;top:122px;width:13px;height:13px;background:#fff;border:1px solid #767676"></div>
<div class="a" style="left:23.6px;top:124.34px;font-size:12px;line-height:12px;white-space:nowrap;color:#1f1f1f;font-weight:normal;letter-spacing:-0.15px">Unit Price</div>
<div class="a" style="left:397px;top:0px;width:17px;height:138px;background:#f0f0f0"></div>
<div class="a" style="left:401px;top:44px;width:9px;height:52px;background:#6e6e6e"></div>
<svg class="a" style="left:397px;top:0px" width="17" height="138"><polygon points="4.5,12 13,12 8.75,4.8" fill="#707070"/><polygon points="4.5,125 13,125 8.75,132.5" fill="#707070"/></svg>
</div>
<div class="a" style="left:188px;top:448px;width:414px;height:1px;background:repeating-linear-gradient(90deg,#b9b9b9 0 1px,transparent 1px 4px)"></div>
<div class="a" style="left:189.6px;top:455.34px;font-size:12px;line-height:12px;white-space:nowrap;color:#262626;font-weight:normal;letter-spacing:-0.2px;">Drag fields between areas b</div>
<div class="a" style="left:394px;top:485px;width:1px;height:209px;background:#c6c6c6"></div>
<div class="a" style="left:188px;top:589px;width:414px;height:1px;background:#c6c6c6"></div>
<svg class="a" style="left:190px;top:485px" width="16" height="16"><polygon points="2,2 13.2,2 13.2,3.2 9.4,7 9.4,13 5.7,13 5.7,7 2,3.2" fill="#8c8c8c"/></svg>
<div class="a" style="left:211.5px;top:487.84px;font-size:12px;line-height:12px;white-space:nowrap;color:#1f1f1f;font-weight:normal;letter-spacing:-0.3px;">Filters</div>
<svg class="a" style="left:400px;top:486px" width="16" height="14"><rect x="2" y="2" width="2.7" height="10" fill="#8c8c8c"/><rect x="5.7" y="2" width="1.1" height="10" fill="#8c8c8c"/><rect x="7.7" y="2" width="1.1" height="10" fill="#8c8c8c"/><rect x="9.9" y="2" width="1.1" height="10" fill="#8c8c8c"/></svg>
<div class="a" style="left:420.8px;top:487.84px;font-size:12px;line-height:12px;white-space:nowrap;color:#1f1f1f;font-weight:normal;">Columns</div>
<svg class="a" style="left:191px;top:597px" width="16" height="14"><rect x="2" y="2" width="10" height="2.8" fill="#8c8c8c"/><rect x="2" y="5.9" width="10" height="1.1" fill="#8c8c8c"/><rect x="2" y="7.9" width="10" height="1.1" fill="#8c8c8c"/><rect x="2" y="9.9" width="10" height="1.1" fill="#8c8c8c"/></svg>
<div class="a" style="left:211.5px;top:598.84px;font-size:12px;line-height:12px;white-space:nowrap;color:#1f1f1f;font-weight:normal;letter-spacing:-0.6px;">Rows</div>
<svg class="a" style="left:401px;top:597px" width="16" height="14"><polyline points="11,4.5 11,2.6 2.6,2.6 7,6.3 2.6,10.2 11,10.2 11,8.3" fill="none" stroke="#8a8a8a" stroke-width="1.1"/></svg>
<div class="a" style="left:420px;top:598.84px;font-size:12px;line-height:12px;white-space:nowrap;color:#1f1f1f;font-weight:normal;">Values</div>
<div class="a" style="left:188px;top:505px;width:200px;height:78px;background:#fff"></div>
<div class="a" style="left:397px;top:505px;width:205px;height:78px;background:#fff"></div>
<div class="a" style="left:188px;top:616px;width:200px;height:78px;background:#fff"></div>
<div class="a" style="left:397px;top:616px;width:205px;height:78px;background:#fff"></div>
<div class="a" style="left:398px;top:507px;width:203px;height:19px;background:#fff;border:1px solid #b0b0b0"></div>
<svg class="a" style="left:587px;top:507px" width="10" height="19"><polyline points="1.6,8.2 4.2,10.7 6.8,8.2" fill="none" stroke="#222" stroke-width="1.3"/></svg>
<div class="a" style="left:405px;top:510.64px;font-size:12px;line-height:12px;white-space:nowrap;color:#1f1f1f;font-weight:normal;letter-spacing:-0.2px;">Month</div>
<div class="a" style="left:189px;top:618px;width:198px;height:19px;background:#fff;border:1px solid #b0b0b0"></div>
<svg class="a" style="left:373px;top:618px" width="10" height="19"><polyline points="1.6,8.2 4.2,10.7 6.8,8.2" fill="none" stroke="#222" stroke-width="1.3"/></svg>
<div class="a" style="left:196px;top:621.64px;font-size:12px;line-height:12px;white-space:nowrap;color:#1f1f1f;font-weight:normal;letter-spacing:-0.2px;">Region</div>
<div class="a" style="left:398px;top:618px;width:203px;height:19px;background:#fff;border:1px solid #b0b0b0"></div>
<svg class="a" style="left:587px;top:618px" width="10" height="19"><polyline points="1.6,8.2 4.2,10.7 6.8,8.2" fill="none" stroke="#222" stroke-width="1.3"/></svg>
<div class="a" style="left:405px;top:621.64px;font-size:12px;line-height:12px;white-space:nowrap;color:#1f1f1f;font-weight:normal;letter-spacing:-0.2px;">Sum of Revenue</div>
<div class="a" style="left:191px;top:719px;width:13px;height:13px;background:#fff;border:1px solid #6e6e6e;border-radius:2px"></div>
<div class="a" style="left:211.5px;top:720.34px;font-size:12px;line-height:12px;white-space:nowrap;color:#1f1f1f;font-weight:normal;">Defer Layout Update</div>
<div class="a" style="left:552px;top:713px;width:50px;height:24px;background:#f0f0f0;border:1px solid #d1d1d1"></div>
<div class="a" style="left:558.5px;top:719.34px;font-size:12px;line-height:12px;white-space:nowrap;color:#a3a3a3;font-weight:normal;">Update</div>
<svg class="a" style="left:0;top:0;filter:drop-shadow(2px 2px 2px rgba(0,0,0,0.35))" width="804" height="749">
<path d="M322,300 L486,300 L486,425.2 L390.3,425.2 L244.5,629 L350,425.2 L322,425.2 Z" fill="#4ea72e" stroke="#357a1f" stroke-width="1.9" stroke-linejoin="miter"/>
</svg>
<div class="a" style="left:332px;top:309.03px;font-size:16.5px;line-height:16.5px;white-space:nowrap;color:#ffffff;font-weight:normal;-webkit-text-stroke:0.25px #fff;">Drag and drop</div>
<div class="a" style="left:332px;top:331.63px;font-size:16.5px;line-height:16.5px;white-space:nowrap;color:#ffffff;font-weight:normal;-webkit-text-stroke:0.25px #fff;">fields into the</div>
<div class="a" style="left:332px;top:354.23px;font-size:16.5px;line-height:16.5px;white-space:nowrap;color:#ffffff;font-weight:normal;-webkit-text-stroke:0.25px #fff;">different areas &nbsp;to</div>
<div class="a" style="left:332px;top:376.83px;font-size:16.5px;line-height:16.5px;white-space:nowrap;color:#ffffff;font-weight:normal;-webkit-text-stroke:0.25px #fff;">create a pivot table</div>
<div class="a" style="left:332px;top:399.43px;font-size:16.5px;line-height:16.5px;white-space:nowrap;color:#ffffff;font-weight:normal;-webkit-text-stroke:0.25px #fff;">(shown above).</div>
<div class="a" style="left:0;top:0;width:804px;height:749px;border:1px solid #000"></div>
</div></body></html>
